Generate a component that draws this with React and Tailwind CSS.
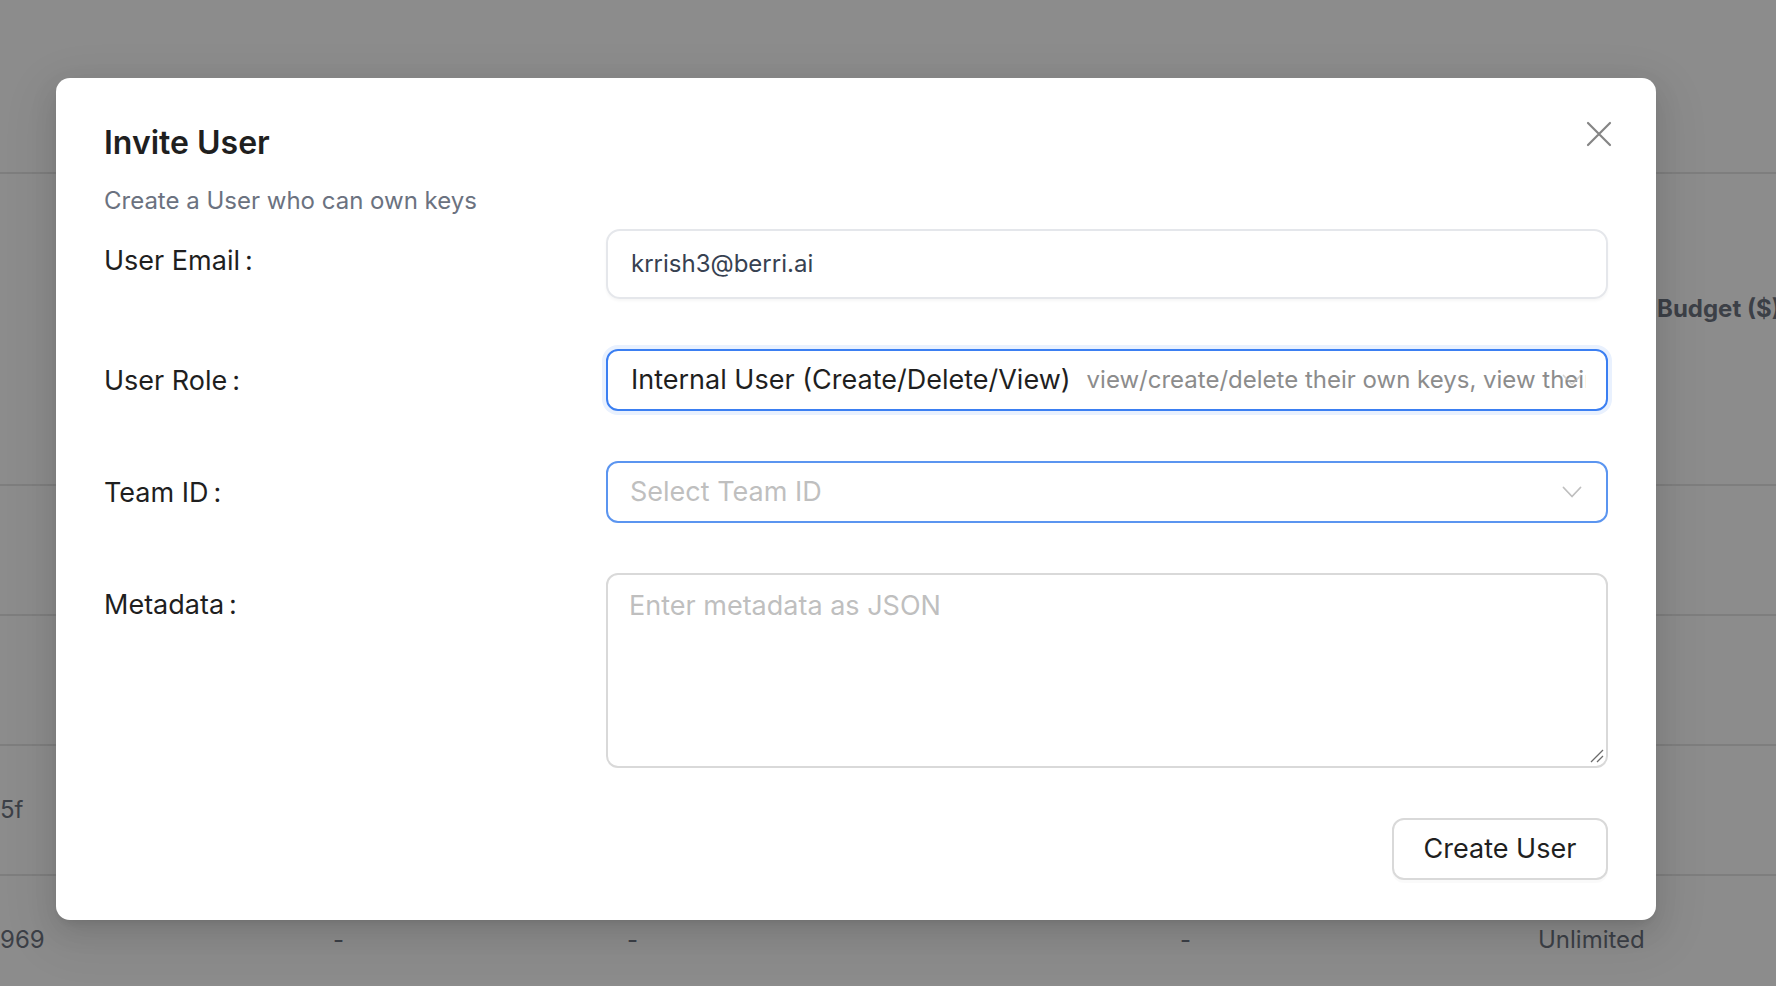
import React from "react";

// ── Icons ───────────────────────────────────────────────────────
const CloseIcon = () => (
  <svg width="26" height="26" viewBox="0 0 26 26" fill="none">
    <path d="M2 2L24 24M24 2L2 24" stroke="#858585" strokeWidth="2.2" strokeLinecap="round" />
  </svg>
);

const ChevronDown = ({ color = "#bfbfbf" }) => (
  <svg width="20" height="12" viewBox="0 0 20 12" fill="none">
    <path d="M1.5 1.5L10 10.5L18.5 1.5" stroke={color} strokeWidth="1.8" strokeLinecap="round" strokeLinejoin="round" />
  </svg>
);

const ResizeHandle = () => (
  <svg width="16" height="14" viewBox="0 0 16 14" fill="none">
    <path d="M3 13L15 1M9 13L15 7" stroke="#6b6b6b" strokeWidth="1.3" />
  </svg>
);

// ── Form row ────────────────────────────────────────────────────
const FormRow = ({ label, children, last }) => (
  <div className={`flex items-start ${last ? "" : "mb-[50px]"}`}>
    <div className="flex h-[62px] w-[502px] shrink-0 items-center pt-[3px] text-[27px] text-[#1f1f1f]">
      {label}
      <span className="ml-[5px]">:</span>
    </div>
    <div className="min-w-0 flex-1">{children}</div>
  </div>
);

// ── Background table (behind the overlay) ───────────────────────
const BackgroundTable = () => (
  <div className="pt-[172px] text-[24px] text-[#3c4047]">
    <div className="flex h-[312px] items-start border-t-2 border-[#7e7e7e] pt-[117px]">
      <span className="ml-[1657px] whitespace-nowrap font-bold">Budget ($)</span>
    </div>
    <div className="h-[130px] border-t-2 border-[#7e7e7e]" />
    <div className="h-[130px] border-t-2 border-[#7e7e7e]" />
    <div className="flex h-[130px] items-center border-t-2 border-[#7e7e7e]">
      <span>5f</span>
    </div>
    <div className="grid h-[130px] grid-cols-[333px_294px_553px_358px_1fr] items-center border-t-2 border-[#7e7e7e]">
      <span>969</span>
      <span>-</span>
      <span>-</span>
      <span>-</span>
      <span>Unlimited</span>
    </div>
  </div>
);

export default function App() {
  return (
    <div className="relative h-[986px] w-[1776px] overflow-hidden bg-[#8c8c8c] font-['Inter','Noto_Sans',sans-serif]">
      <BackgroundTable />

      {/* ── Modal ─────────────────────────────────────────────── */}
      <div className="absolute left-[56px] top-[78px] h-[842px] w-[1600px] rounded-[14px] bg-white px-12 pt-[45px] shadow-[0_10px_28px_0_rgba(0,0,0,0.1),0_5px_10px_-6px_rgba(0,0,0,0.14),0_15px_48px_14px_rgba(0,0,0,0.06)]">
        <button className="absolute right-[44px] top-[43px]">
          <CloseIcon />
        </button>

        <h2 className="text-[32px] font-semibold leading-[40px] text-[#1f1f1f]">Invite User</h2>
        <p className="mt-[22px] text-[24px] leading-[32px] text-[#6b7280]">Create a User who can own keys</p>

        <div className="mt-[12px]">
          <FormRow label="User Email">
            <div className="flex h-[70px] items-center rounded-[14px] border-2 border-[#e5e7eb] px-[23px] text-[24px] text-[#374151] shadow-[0_2px_3px_rgba(0,0,0,0.04)]">
              krrish3@berri.ai
            </div>
          </FormRow>

          <FormRow label="User Role">
            <div className="relative flex h-[62px] items-center overflow-hidden rounded-[12px] border-2 border-[#3b7ff2] pl-[23px] pr-[20px] shadow-[0_0_0_4px_#e9f1fe]">
              <div className="flex min-w-0 flex-1 items-center overflow-hidden whitespace-nowrap">
                <span className="text-[27px] text-[#1f1f1f]">Internal User (Create/Delete/View)</span>
                <span className="ml-[16px] text-[24px] text-[#8c8c8c]">
                  view/create/delete their own keys, view their spend
                </span>
              </div>
              <div className="absolute right-[24px] top-[23px] opacity-60">
                <ChevronDown />
              </div>
            </div>
          </FormRow>

          <FormRow label="Team ID">
            <div className="flex h-[62px] items-center justify-between rounded-[12px] border-2 border-[#5b95f0] pl-[22px] pr-[24px]">
              <span className="text-[27px] text-[#bfbfbf]">Select Team ID</span>
              <ChevronDown />
            </div>
          </FormRow>

          <FormRow label="Metadata">
            <div className="relative">
              <textarea
                className="block h-[195px] w-full resize-none rounded-[12px] border-2 border-[#d9d9d9] px-[21px] py-[11px] text-[27px] leading-[40px] outline-none placeholder:text-[#bfbfbf]"
                placeholder="Enter metadata as JSON"
              />
              <div className="absolute bottom-[5px] right-[4px]">
                <ResizeHandle />
              </div>
            </div>
          </FormRow>

          <div className="mt-[50px] flex justify-end">
            <button className="h-[62px] w-[216px] rounded-[12px] border-2 border-[#d9d9d9] bg-white text-[27px] text-[#1f1f1f] shadow-[0_3px_0_rgba(0,0,0,0.02)]">
              Create User
            </button>
          </div>
        </div>
      </div>
    </div>
  );
}
